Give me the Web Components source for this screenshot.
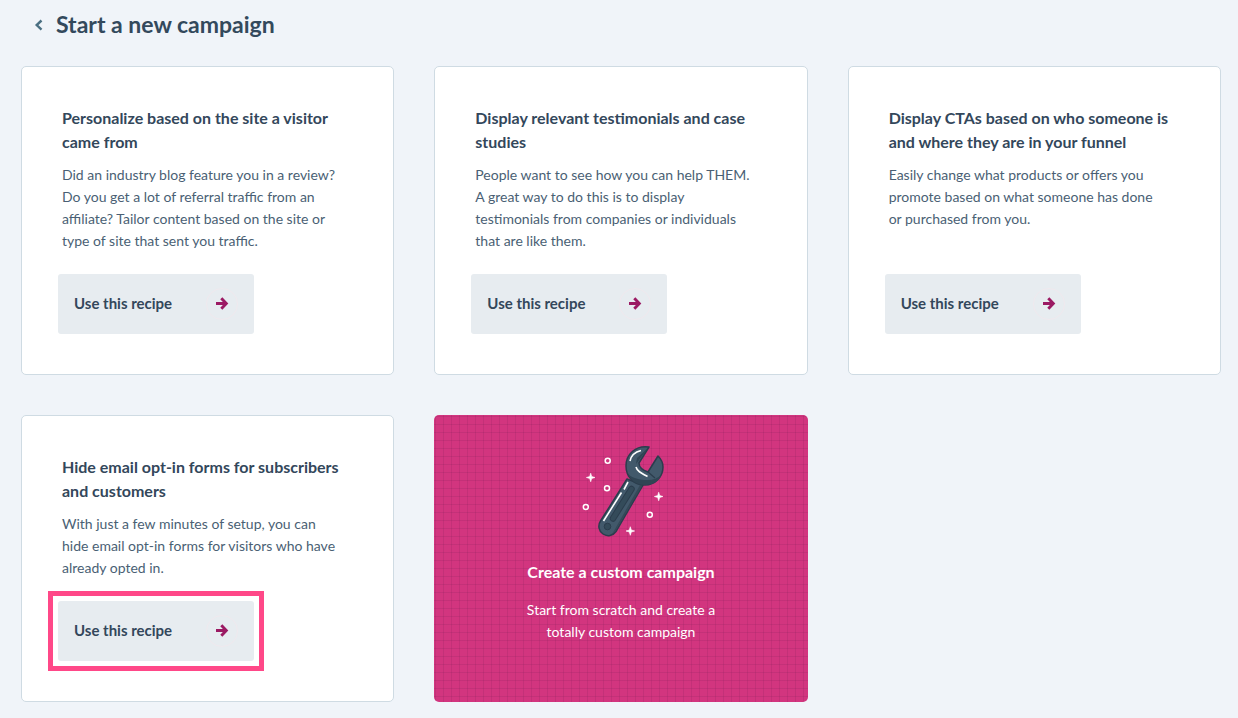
<!DOCTYPE html>
<html lang="en">
<head>
<meta charset="utf-8">
<meta name="viewport" content="width=device-width, initial-scale=1">
<title>Start a new campaign</title>
<style>
  body {
    margin: 0;
    background: #f0f4f9;
    color: #33475b;
    font-family: Lato, "Open Sans", sans-serif;
  }
</style>
</head>
<body>
<campaign-page>
  <page-header slot="header" href="#campaigns">Start a new campaign</page-header>
  <recipe-card heading="Personalize based on the site a visitor came from">Did an industry blog feature you in a review? Do you get a lot of referral traffic from an affiliate? Tailor content based on the site or type of site that sent you traffic.</recipe-card>
  <recipe-card heading="Display relevant testimonials and case studies">People want to see how you can help THEM. A great way to do this is to display testimonials from companies or individuals that are like them.</recipe-card>
  <recipe-card heading="Display CTAs based on who someone is and where they are in your funnel">Easily change what products or offers you promote based on what someone has done or purchased from you.</recipe-card>
  <recipe-card heading="Hide email opt-in forms for subscribers and customers" highlighted>With just a few minutes of setup, you can hide email opt-in forms for visitors who have already opted in.</recipe-card>
  <custom-card href="#custom" heading="Create a custom campaign">Start from scratch and create a totally custom campaign</custom-card>
</campaign-page>

<script>
class ShadowElement extends HTMLElement {
  connectedCallback() {
    if (this.shadowRoot) return;
    this.attachShadow({ mode: 'open' }).innerHTML = this.template();
    const heading = this.shadowRoot.querySelector('h2');
    if (heading) heading.textContent = this.getAttribute('heading');
    const link = this.shadowRoot.querySelector('a');
    if (link) link.setAttribute('href', this.getAttribute('href'));
  }
}

customElements.define('campaign-page', class extends ShadowElement {
  template() {
    return `
      <style>
        :host { display: block; padding: 8px 17px 16px 21px; }
        main {
          display: grid;
          grid-template-columns: repeat(3, minmax(0, 1fr));
          gap: 40px;
          margin-top: 26px;
        }
        @media (max-width: 900px) { main { grid-template-columns: repeat(2, minmax(0, 1fr)); } }
        @media (max-width: 600px) { main { grid-template-columns: minmax(0, 1fr); } }
      </style>
      <slot name="header"></slot>
      <main><slot></slot></main>`;
  }
});

customElements.define('page-header', class extends ShadowElement {
  template() {
    return `
      <style>
        :host { display: block; padding-left: 12px; }
        header { display: flex; align-items: center; gap: 11px; }
        a { display: flex; color: #4b7083; }
        svg { display: block; width: 12px; height: 14px; }
        h1 { margin: 0; font-size: 23px; line-height: 32px; font-weight: 700; color: #33495c; }
      </style>
      <header>
        <a aria-label="Back"><svg viewBox="0 0 12 14" fill="none" stroke="currentColor" stroke-width="2.4" aria-hidden="true"><path d="M8.500 3.500 3.700 8l4.800 4.700"/></svg></a>
        <h1><slot></slot></h1>
      </header>`;
  }
});

customElements.define('recipe-button', class extends ShadowElement {
  template() {
    return `
      <style>
        :host { display: block; width: 196px; }
        :host([highlighted]) { outline: 5px solid #ff4888; outline-offset: 5px; }
        button {
          display: flex;
          align-items: center;
          justify-content: space-between;
          width: 100%;
          height: 60px;
          padding: 0 16px;
          border: 0;
          border-radius: 3px;
          background: #e7ecf0;
          color: #33475b;
          font: 700 15px/22px Lato, "Open Sans", sans-serif;
          cursor: pointer;
        }
        .label { padding-bottom: 2px; }
        .ring {
          display: grid;
          place-items: center;
          box-sizing: border-box;
          width: 32px;
          height: 32px;
          border: 1px solid #f0e9ee;
          border-radius: 50%;
        }
        svg { display: block; width: 14px; height: 14px; }
      </style>
      <button type="button">
        <span class="label"><slot></slot></span>
        <span class="ring"><svg viewBox="0 0 14 14" fill="none" stroke="#9b1a63" stroke-width="2.900" aria-hidden="true"><path d="M1 6.500h10M6.300 1.300 11.300 6.500l-5 5.200"/></svg></span>
      </button>`;
  }
});

customElements.define('recipe-card', class extends ShadowElement {
  template() {
    return `
      <style>
        :host { display: block; }
        article {
          display: flex;
          flex-direction: column;
          box-sizing: border-box;
          height: 100%;
          padding: 39px 40px 40px;
          border: 1px solid #cfdbe3;
          border-radius: 5px;
          background: #fff;
        }
        h2 { margin: 0 0 10px; font-size: 16px; line-height: 24px; font-weight: 700; }
        p { margin: 0 0 22px; padding-right: 12px; font-size: 14px; line-height: 22px; color: #4a5f74; }
        recipe-button { margin: auto 0 0 -4px; }
      </style>
      <article>
        <h2></h2>
        <p><slot></slot></p>
        <recipe-button ${this.hasAttribute('highlighted') ? 'highlighted' : ''}>Use this recipe</recipe-button>
      </article>`;
  }
});

customElements.define('wrench-picture', class extends ShadowElement {
  template() {
    return `
      <style>
        :host { display: block; }
        svg { display: block; width: 102px; height: 96px; }
      </style>
      <svg viewBox="0 12 102 96" fill="none" aria-hidden="true">
        <path d="M57 49 30.500 91a9.300 9.300 0 0 0 15.500 10.500L73 55Z" fill="#42596b" stroke="#2b3d4d" stroke-width="1.500" stroke-linejoin="round"/>
        <path d="M72 56 45.500 100.500a9 9 0 0 1-3 3L70 55Z" fill="#344958"/>
        <path d="M79 17C66 15 56 24 56 36c0 11 8 19 19 19 10 0 18-8 18-18 0-4-2-8-5-11L78 42C72 40 69 37 69 33Z" fill="#42596b" stroke="#2b3d4d" stroke-width="1.500" stroke-linejoin="round"/>
        <path d="M58 44c3 7 9 11 17 11 8 0 14-4 16.500-10-4 3-8 5-14 5-8 0-15-2-19.500-6ZM78 18l-9 12-3 4 1-6Z" fill="#304554"/>
        <path d="M78 42l7 6" stroke="#2b3d4d" stroke-width="1.200"/>
        <path d="M61.500 59 43 88.500" stroke="#2b3d4d" stroke-width="6.500" stroke-linecap="round"/>
        <path d="M61.500 59 43 88.500" stroke="#344b5a" stroke-width="4.500" stroke-linecap="round"/>
        <circle cx="37.500" cy="96.500" r="3.300" fill="#344b5a" stroke="#2b3d4d"/>
        <path d="M60 31c1-5 5-9 11-10.500M66 37c1 4 5 6 11.500 9.500M58 52l-4 7.500M51.500 62.500 33.500 91" stroke="#fff" stroke-width="1.600"/>
        <g stroke="#fff" stroke-width="1.500">
          <circle cx="37.700" cy="30.800" r="2.500"/>
          <circle cx="37" cy="58.200" r="2.500"/>
          <circle cx="15.800" cy="77" r="2.500"/>
          <circle cx="79.800" cy="84.800" r="2.500"/>
        </g>
        <path d="M20.700 43.200l1 3.300 3.300 1-3.300 1-1 3.300-1-3.300-3.300-1 3.300-1ZM88.700 62.200l1 3.300 3.300 1-3.300 1-1 3.300-1-3.300-3.300-1 3.300-1ZM60.300 96.700l1 3.300 3.300 1-3.300 1-1 3.300-1-3.300-3.300-1 3.300-1Z" fill="#fff" stroke="#fff" stroke-width=".6"/>
      </svg>`;
  }
});

customElements.define('custom-card', class extends ShadowElement {
  template() {
    return `
      <style>
        :host { display: block; }
        a {
          display: flex;
          flex-direction: column;
          align-items: center;
          box-sizing: border-box;
          height: 100%;
          padding: 27px 80px 40px;
          border-radius: 5px;
          background:
            repeating-linear-gradient(to right, transparent 0 1px, rgba(90, 20, 70, .12) 1px 2px, transparent 2px 8px),
            repeating-linear-gradient(to bottom, transparent 0 1px, rgba(90, 20, 70, .12) 1px 2px, transparent 2px 8px),
            #d2357f;
          color: #fff;
          text-align: center;
          text-decoration: none;
        }
        h2 { margin: 22px 0 15px; font-size: 16px; line-height: 24px; font-weight: 700; }
        p { margin: 0; font-size: 14px; line-height: 22px; }
      </style>
      <a>
        <wrench-picture></wrench-picture>
        <h2></h2>
        <p><slot></slot></p>
      </a>`;
  }
});
</script>
</body>
</html>
